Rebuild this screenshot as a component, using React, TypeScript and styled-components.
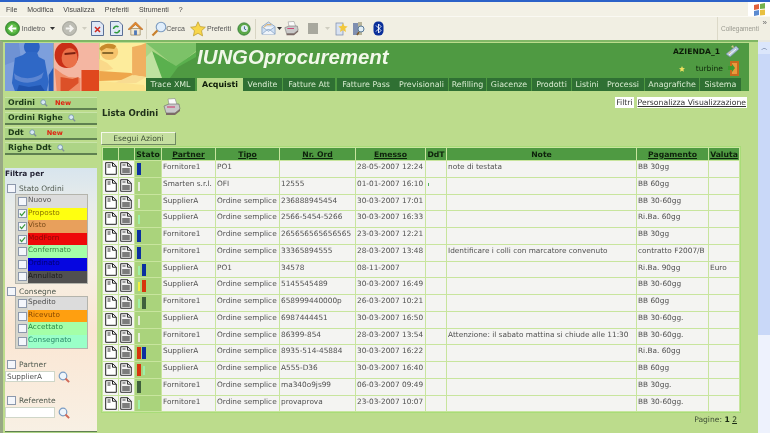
import React from "react";
import styled, { createGlobalStyle } from "styled-components";

const Global = createGlobalStyle`
  html, body { margin: 0; padding: 0; background: #fff; overflow: hidden; }
  * { box-sizing: border-box; }
  svg { display: block; }
`;

const UI = `"DejaVu Sans", Verdana, sans-serif`;
const XP = `"Liberation Sans", Arial, sans-serif`;

const Page = styled.div`
  width: 770px; height: 433px; overflow: hidden; display: flex; flex-direction: column;
  filter: blur(0.4px); font-family: ${UI}; background: #bcdc8c;
`;
const TitleStrip = styled.div`height: 2px; background: #2c62c8; flex: none;`;
const MenuBar = styled.div`
  height: 14px; flex: none; display: flex; align-items: center; background: #f3f1e6;
  font: 7px ${XP}; color: #444; padding-left: 6px; gap: 10px; position: relative;
`;
const WinFlag = styled.div`
  position: absolute; right: 0; top: 0; width: 22px; height: 15px; background: #fff;
  display: flex; align-items: center; justify-content: center;
`;
const Toolbar = styled.div`
  height: 24px; flex: none; display: flex; align-items: center; background: #f1efe3;
  border-top: 1px solid #faf9f3; font: 7px ${XP}; color: #555; padding-left: 5px; position: relative;
`;
const ToolItem = styled.span<{ $w: number; $l?: number }>`
  display: inline-flex; align-items: center; justify-content: center; flex: none;
  width: ${p => p.$w}px; margin-left: ${p => p.$l ?? 0}px; white-space: nowrap;
`;
const ToolLabel = styled.span`margin-left: 2px;`;
const ToolSep = styled.span<{ $l: number }>`
  width: 1px; height: 20px; background: #d8d5c4; flex: none; margin-left: ${p => p.$l}px;
`;
const LinksBox = styled.div`
  position: absolute; left: 717px; top: 0; bottom: 0; width: 53px; border-left: 1px solid #dcd9c8;
  color: #9a9a90; font-size: 6.5px; padding: 8px 0 0 3px;
`;
const More = styled.span`position: absolute; right: 3px; top: 1px; color: #666; font-size: 8px;`;

const Body = styled.div`flex: 1; min-height: 0; display: flex; background: #bcdc8c;`;
const Main = styled.div`
  flex: 1; min-width: 0; display: flex; flex-direction: column; border-left: 3px solid #98a884;
  border-top: 2px solid #7fb765; padding: 1px 9px 0 2px; background: #bcdc8c;
`;
const Scrollbar = styled.div`
  width: 12px; flex: none; background: #eef2fd; display: flex; flex-direction: column; border-top: 2px solid #e8e8e0;
`;
const ScrollBtn = styled.div`
  height: 12px; background: #dbe6fb; color: #4d6185; font-size: 7px; display: flex;
  align-items: center; justify-content: center;
`;
const ScrollThumb = styled.div`height: 281px; background: #c9d8f8;`;

const Header = styled.header`
  height: 48px; flex: none; background: #4f9a42; display: flex; position: relative;
`;
const HeaderRight = styled.div`flex: 1; min-width: 0; display: flex; flex-direction: column;`;
const HeaderTop = styled.div`flex: 1; display: flex; min-height: 0;`;
const Brand = styled.h1`
  margin: 1px 0 0 1px; font: italic bold 20.4px ${XP}; color: #f1f8e9; line-height: 26px; white-space: nowrap;
`;
const UserBox = styled.div`
  margin-left: auto; padding: 1px 9px 0 0; display: flex; flex-direction: column; align-items: flex-end; gap: 2px;
`;
const UserRow = styled.div<{ $bold?: boolean }>`
  display: flex; align-items: center; gap: 5px; height: 15px; font-size: 7.6px;
  color: ${p => (p.$bold ? "#0c1c08" : "#0f2a0c")}; font-weight: ${p => (p.$bold ? 700 : 400)};
`;
const StarGap = styled.span`width: 1px;`;
const Tabs = styled.nav`display: flex; height: 13px; flex: none;`;
const Tab = styled.a<{ $w: number; $l: number; $on?: boolean }>`
  width: ${p => p.$w}px; margin-left: ${p => p.$l}px; flex: none; display: flex; align-items: center;
  justify-content: center; font-size: 7.9px; white-space: nowrap;
  background: ${p => (p.$on ? "#bcdc8c" : "#2f7033")};
  color: ${p => (p.$on ? "#0c1a08" : "#d8ecd0")}; font-weight: ${p => (p.$on ? 700 : 400)};
`;

const Columns = styled.div`flex: 1; min-height: 0; display: flex;`;
const Sidebar = styled.aside`width: 92px; flex: none; display: flex; flex-direction: column; padding-top: 6px; overflow: hidden;`;
const NavItem = styled.a`
  height: 12.5px; flex: none; margin-bottom: 2.5px; background: #add486; border-bottom: 2px solid #5f8050;
  border-top: 1px solid #c8e4a8; display: flex; align-items: center; padding-left: 3px;
  font-size: 7.8px; font-weight: 700; color: #1c3a18; gap: 5px; white-space: nowrap;
`;
const NewTag = styled.span<{ $l: number }>`
  color: #e02010; font-size: 6.6px; font-weight: 700; margin-left: ${p => p.$l}px;
`;
const FilterPanel = styled.div`
  flex: none; height: 263px; overflow: hidden; margin-top: 11px;
  background: linear-gradient(180deg, #d8e5ee 0%, #e8ecea 14%, #f6efe3 40%, #fbe6d3 62%, #f8f0e4 100%);
`;
const PanelEnd = styled.div`flex: none; height: 3px; border-top: 1px solid #5f8050; background: #add486;`;
const FilterTitle = styled.div`font-size: 7.4px; font-weight: 700; color: #223; padding-top: 1px; height: 15px; line-height: 9px;`;
const GroupHead = styled.label`
  display: flex; align-items: center; height: 10px; padding-left: 2px; gap: 3px;
  font-size: 7.5px; color: #505a50;
`;
const Box = styled.span`
  width: 9px; height: 9px; flex: none; border: 1px solid #8c98ac; background: #f4f6fb;
  display: inline-flex; align-items: center; justify-content: center;
`;
const StateList = styled.div<{ $top: number }>`
  margin: ${p => p.$top}px 0 0 10px; width: 73px; border: 1px solid #b4b4ac;
`;
const StateRow = styled.div<{ $bg: string; $fg: string }>`
  display: flex; height: 12.6px; background: #d6d6ce;
  span.t { flex: 1; background: ${p => p.$bg}; color: ${p => p.$fg}; font-size: 7.3px; line-height: 9px; }
`;
const BoxCell = styled.span`width: 12px; flex: none; display: flex; align-items: center; justify-content: center;`;
const FieldRow = styled.div`display: flex; align-items: center; gap: 3px; margin-top: 1px;`;
const Field = styled.div`
  width: 50px; height: 11px; background: #fff; border: 1px solid #cfd6c8; font-size: 7.3px; color: #555;
  line-height: 9px; padding-left: 1px;
`;
const Spaced = styled.div<{ $top: number }>`margin-top: ${p => p.$top}px;`;

const Content = styled.main`flex: 1; min-width: 0; display: flex; flex-direction: column; padding-left: 6px;`;
const TitleBar = styled.div`display: flex; height: 41px; flex: none; align-items: flex-start;`;
const PageTitle = styled.h2`
  margin: 17px 0 0 -1px; font-size: 8.6px; font-weight: 700; color: #20301a; line-height: 11px; white-space: nowrap;
`;
const PrinterBox = styled.span`margin: 7px 0 0 5px;`;
const FilterLinks = styled.div`margin-left: auto; margin-right: 2px; margin-top: 6px; display: flex; gap: 3px;`;
const WhiteLink = styled.a<{ $u?: boolean }>`
  background: #fff; color: #333; height: 11px; font-size: 7.7px; line-height: 11px; padding: 0 1px;
  text-decoration: ${p => (p.$u ? "underline" : "none")};
`;
const ActionBtn = styled.button`
  width: 75px; height: 13px; margin: 0 0 0 -2px; padding: 0; background: #c5dfa0; color: #3c4c34;
  font: 7.6px ${UI}; border: 1px solid; border-color: #f4f8ea #6f8a62 #6f8a62 #f4f8ea; flex: none;
`;
const OrdersTable = styled.table`
  margin: 1px 0 0 -2px; border-collapse: separate; border-spacing: 1px; table-layout: fixed; width: 638px;
  background: #c8e59e; border: 1px solid #a8dc78; font-size: 7.35px; color: #505050; flex: none;
`;
const Col = styled.col<{ $w: number }>`width: ${p => p.$w}px;`;
const Th = styled.th<{ $plain?: boolean }>`
  height: 12px; padding: 0; background: #4f9a42; color: #0e220c; font-size: 7.7px; font-weight: 700;
  text-decoration: ${p => (p.$plain ? "none" : "underline")}; white-space: nowrap; overflow: hidden;
`;
const Row = styled.tr<{ $h: number }>`height: ${p => p.$h}px;`;
const Td = styled.td`
  padding: 1px 0 0 1px; background: #f4f4f2; vertical-align: top; white-space: nowrap;
  overflow: hidden; line-height: 9px;
`;
const IconTd = styled(Td)`padding: 1px 0 0 1px; &:first-child { padding-left: 2px; }`;
const StateTd = styled(Td)`background: #aad37c; padding: 2px 0 0 2px;`;
const Bars = styled.div`display: flex; gap: 1.5px; align-items: center; height: 12px;`;
const Bar = styled.i<{ $c: string; $thin?: boolean }>`
  display: block; width: ${p => (p.$thin ? 2 : 3.5)}px; height: ${p => (p.$thin ? 9 : 12)}px; background: ${p => p.$c};
  margin: 0 ${p => (p.$thin ? 0.75 : 0)}px;
`;
const Tick = styled.i`display: block; width: 1px; height: 3px; background: #55b060; margin: 4px 0 0 1px;`;
const Footer = styled.div`
  text-align: right; padding: 2px 12px 0 0; font-size: 7.6px; color: #3c4c34; line-height: 10px;
  b { color: #1a2a14; } u { color: #1a2a14; }
`;

const Glass = () => (
  <svg width="8" height="8" viewBox="0 0 10 10">
    <circle cx="4" cy="4" r="3" fill="#d8e8f4" stroke="#6f93a8" />
    <path d="M6 6l3 3" stroke="#7f8f9a" strokeWidth="1.6" />
  </svg>
);
const BigGlass = () => (
  <svg width="12" height="12" viewBox="0 0 12 12">
    <circle cx="5" cy="5" r="3.8" fill="#eef5fb" stroke="#7a9cc4" strokeWidth="1.2" />
    <path d="M7.500 7.500l3.600 3.600" stroke="#d06a58" strokeWidth="2" />
  </svg>
);
const Check = () => (
  <svg width="7" height="7" viewBox="0 0 8 8"><path d="M1 4l2 2.400L7 1.500" fill="none" stroke="#3a9a3a" strokeWidth="1.4" /></svg>
);
const DocA = () => (
  <svg width="12" height="13" viewBox="0 0 12 13">
    <path d="M.7.7h7l3.600 3.400v8.200H.7z" fill="#fff" stroke="#222" />
    <path d="M7.500.7v3.500h3.600" fill="none" stroke="#222" />
    <path d="M2.500 3h3M2.500 5h3" stroke="#333" />
  </svg>
);
const DocB = () => (
  <svg width="12" height="13" viewBox="0 0 12 13">
    <path d="M.7.7h7l3.600 3.400v8.200H.7z" fill="#f0f0f0" stroke="#333" />
    <path d="M7.500.7v3.500h3.600" fill="none" stroke="#333" />
    <path d="M2.500 3h3" stroke="#444" />
    <rect x="2.200" y="6" width="7.600" height="5" fill="#7c7c7c" />
  </svg>
);
const Printer = ({ s = 18 }: { s?: number }) => (
  <svg width={s} height={s} viewBox="0 0 18 18">
    <path d="M5 1l7-.5 2 6H6z" fill="#fbfbfb" stroke="#888" strokeWidth=".6" />
    <path d="M1 8l5-2h10l1 5-5 4H3z" fill="#c9c9c9" stroke="#666" strokeWidth=".6" />
    <path d="M3 15l9 0 5-4v2l-5 4H3z" fill="#7c6a66" />
    <path d="M4 9h8" stroke="#d04878" strokeWidth="1.2" />
  </svg>
);

const Hero = () => (
  <svg width="141" height="48" viewBox="0 0 142 48" preserveAspectRatio="none" style={{ flex: "none" }}>
    <rect width="49" height="48" fill="#7d9fdc" />
    <path d="M0 0h14l2 16-16 6z" fill="#6f92d4" />
    <ellipse cx="27" cy="4" rx="8" ry="8" fill="#2b63c2" />
    <path d="M22 9h10l2 5 6 3 4 22-2 9H10l-3-8 3-25 8-3z" fill="#2f68c6" />
    <path d="M9 30c6 7 22 7 30-1l-2 6c-8 6-20 6-27 1z" fill="#5d86d2" />
    <path d="M44 48V32l5-8v24z" fill="#245ab6" />
    <path d="M14 42l10 2 12-2 4 6H12z" fill="#1f52ac" />

    <rect x="49" width="46" height="48" fill="#f4b6a2" />
    <ellipse cx="62" cy="12" rx="12" ry="13" fill="#c92f16" />
    <ellipse cx="65" cy="15" rx="8" ry="10" fill="#ea7048" />
    <path d="M60 10l11-1v2l-11 1z" fill="#7a2010" />
    <path d="M50 25l8 6 6 3 12 1v13H52z" fill="#ef8c66" />
    <path d="M56 34l12 2 6-2 0 6-10 8h-8z" fill="#dc5028" />
    <path d="M77 27h18v21H77z" fill="#e0481e" />

    <rect x="95" width="47" height="48" fill="#fdec9c" />
    <ellipse cx="105" cy="9" rx="9" ry="8" fill="#f6c46c" />
    <path d="M95 6c2-5 12-7 17-3l-2 3-8-1-5 3z" fill="#c88a2c" />
    <path d="M98 9h11v2H98z" fill="#8a6a2c" />
    <path d="M95 16l8 4 6 6-14 3z" fill="#fad98a" />
    <path d="M95 28l32 2 5 4-10 3-27 1z" fill="#eea64c" />
    <path d="M128 4l9-2 5-2v34l-14-2z" fill="#f0b060" />
    <path d="M128 32l14 2-10 6-24 1z" fill="#f8dc92" />
    <path d="M95 38l45 4 2 6H95z" fill="#fbe28c" />
  </svg>
);
const Envelope = () => (
  <svg width="50" height="35" viewBox="0 0 50 35" style={{ flex: "none" }}>
    <rect width="50" height="35" fill="#a9d585" />
    <path d="M0 0h50v8L30 24z" fill="#7cc268" />
    <path d="M6 8l24 15 20-14v26H14z" fill="#5ab04e" />
    <path d="M6 8l10 27h-16V14z" fill="#bfe2a0" />
    <path d="M32 24l18-10v21H24z" fill="#4f9a42" />
  </svg>
);

const Back = () => (
  <svg width="15" height="15" viewBox="0 0 16 16">
    <circle cx="8" cy="8" r="7.400" fill="#4bab3b" stroke="#2d7d28" />
    <circle cx="8" cy="8" r="5" fill="#66c04e" />
    <path d="M12 8H5M8 4.600L4.600 8 8 11.400" fill="none" stroke="#fff" strokeWidth="2" />
  </svg>
);
const Forward = () => (
  <svg width="15" height="15" viewBox="0 0 16 16">
    <circle cx="8" cy="8" r="7.400" fill="#bdbdb4" stroke="#a0a098" />
    <path d="M4 8h7M8 4.600L11.400 8 8 11.400" fill="none" stroke="#f4f4f0" strokeWidth="2" />
  </svg>
);
const Caret = ({ c = "#333" }: { c?: string }) => (
  <svg width="5" height="3" viewBox="0 0 5 3"><path d="M0 0h5L2.500 3z" fill={c} /></svg>
);
const PageIcon = ({ children }: { children: React.ReactNode }) => (
  <svg width="13" height="15" viewBox="0 0 13 15">
    <path d="M.5.5h8.500l3.500 3.500v10.500H.5z" fill="#dfe8f6" stroke="#5a6f96" />
    {children}
  </svg>
);
const Home = () => (
  <svg width="15" height="15" viewBox="0 0 16 16">
    <path d="M3 8v7h10V8z" fill="#f2e8d0" stroke="#8f7a50" strokeWidth=".7" />
    <path d="M0 9l8-8 8 8-2 0-6-5-6 5z" fill="#e58a2c" stroke="#a85a18" strokeWidth=".6" />
    <rect x="6.500" y="10" width="3" height="5" fill="#4f78b8" />
  </svg>
);
const Search = () => (
  <svg width="16" height="16" viewBox="0 0 16 16">
    <circle cx="10" cy="6" r="4.800" fill="#e0eefb" stroke="#7d9cc0" strokeWidth="1.100" />
    <path d="M6.400 9.400L1.500 14.500" stroke="#c8802c" strokeWidth="2.200" />
  </svg>
);
const Star = () => (
  <svg width="16" height="16" viewBox="0 0 16 16">
    <path d="M8 .8l2.200 4.800 5.200.6-3.900 3.500 1.100 5.200L8 12.300l-4.600 2.600 1.100-5.200L.6 6.200l5.200-.6z" fill="#f8d64a" stroke="#b89a2c" strokeWidth=".7" />
  </svg>
);
const History = () => (
  <svg width="14" height="14" viewBox="0 0 16 16">
    <circle cx="8" cy="8" r="7" fill="#5ca848" stroke="#2f7a34" />
    <circle cx="8.500" cy="7.500" r="4" fill="#e0eef0" />
    <path d="M8.500 5v3l2 1" stroke="#2f5a8a" fill="none" />
  </svg>
);
const Mail = () => (
  <svg width="15" height="15" viewBox="0 0 16 16">
    <path d="M1 6l7-5 7 5v8H1z" fill="#cfe0f4" stroke="#7b98bc" strokeWidth=".8" />
    <path d="M1 14l6-5h2l6 5M1 6l7 5 7-5" fill="#eef4fb" stroke="#7b98bc" strokeWidth=".7" />
    <path d="M3 7l3-3h5" fill="none" stroke="#e0a040" />
  </svg>
);
const SquareIcon = () => <svg width="10" height="11" viewBox="0 0 10 11"><rect width="10" height="11" fill="#a8a89e" /></svg>;
const Fav1 = () => (
  <svg width="13" height="15" viewBox="0 0 13 15">
    <rect x="1" y="2" width="7" height="12" fill="#d8e2f2" stroke="#7a8aa8" strokeWidth=".7" />
    <path d="M8 2l1.400 3 3.300.4-2.400 2.200.7 3.300L8 9.300l-3 1.600.7-3.300-2.400-2.200 3.300-.4z" fill="#f2c83c" />
  </svg>
);
const Fav2 = () => (
  <svg width="12" height="15" viewBox="0 0 12 15">
    <rect x="0" y="2" width="5" height="12" fill="#7f8fb0" />
    <rect x="5" y="1" width="4" height="13" fill="#b8b49a" />
    <circle cx="8" cy="8" r="3" fill="#e2eef6" stroke="#5a7a98" />
    <path d="M6 11l-2 3" stroke="#7a5a30" strokeWidth="1.500" />
  </svg>
);
const Bluetooth = () => (
  <svg width="11" height="15" viewBox="0 0 11 15">
    <rect x=".5" y=".5" width="10" height="14" rx="4.500" fill="#0a2f9a" />
    <path d="M3 4.500l5 5-2.500 2.500v-9L8 5.500l-5 5" fill="none" stroke="#fff" strokeWidth=".9" />
  </svg>
);
const Flag = () => (
  <svg width="13" height="13" viewBox="0 0 13 13">
    <path d="M1 2l5-1v5L1 7z" fill="#e0603c" />
    <path d="M7 1l5-1v5.500L7 6z" fill="#74b04c" />
    <path d="M1 8l5-1v5l-5 1z" fill="#5a8ad0" />
    <path d="M7 7l5-.5V12l-5 .5z" fill="#e8c040" />
  </svg>
);
const Company = () => (
  <svg width="15" height="15" viewBox="0 0 15 15">
    <path d="M1 10l10-8 3 3-9 8z" fill="#b4c8dc" stroke="#6f86a0" strokeWidth=".6" />
    <path d="M6 3l2-2 1 3zM3 9l3-2-1 3z" fill="#d8c890" />
    <path d="M4 11l7-6" stroke="#f4f8fc" />
  </svg>
);
const Door = () => (
  <svg width="12" height="15" viewBox="0 0 12 15">
    <rect x="2" y="0" width="9" height="15" fill="#c66a1e" />
    <rect x="4" y="2" width="5" height="11" fill="#e89a3c" />
    <path d="M0 5h4V3l3 4-3 4V9H0z" fill="#3c9a30" />
  </svg>
);
const TinyStar = () => (
  <svg width="6" height="6" viewBox="0 0 6 6"><path d="M3 0l.9 2 2.100.2-1.600 1.400.5 2.200L3 4.700 1.100 5.800l.5-2.200L0 2.200 2.100 2z" fill="#efe060" /></svg>
);

const M = "#9ff0a8"; const W = "#e6ecdc"; const B = "#0a2fa0"; const R = "#d8340c"; const Y = "#f4f040"; const D = "#3f5f3c";
type S = { c: string; thin?: boolean };
const m: S = { c: M, thin: true }, w: S = { c: W, thin: true }, b: S = { c: B }, r: S = { c: R }, y: S = { c: Y, thin: true }, d: S = { c: D };
const rows: [S[], string, string, string, string, string, string, string][] = [
  [[b], "Fornitore1", "PO1", "", "28-05-2007 12:24", "note di testata", "BB 30gg", ""],
  [[w], "Smarten s.r.l.", "OFI", "12555", "01-01-2007 16:10", "", "BB 60gg", ""],
  [[w], "SupplierA", "Ordine semplice", "236888945454", "30-03-2007 17:01", "", "BB 30-60gg", ""],
  [[m], "SupplierA", "Ordine semplice", "2566-5454-5266", "30-03-2007 16:33", "", "Ri.Ba. 60gg", ""],
  [[b], "Fornitore1", "Ordine semplice", "265656565656565", "23-03-2007 12:21", "", "BB 30gg", ""],
  [[b], "Fornitore1", "Ordine semplice", "33365894555", "28-03-2007 13:48", "Identificare i colli con marcatore convenuto", "contratto F2007/B", ""],
  [[m, b], "SupplierA", "PO1", "34578", "08-11-2007", "", "Ri.Ba. 90gg", "Euro"],
  [[y, r], "SupplierA", "Ordine semplice", "5145545489", "30-03-2007 16:49", "", "BB 30-60gg", ""],
  [[m, d], "Fornitore1", "Ordine semplice", "658999440000p", "26-03-2007 10:21", "", "BB 60gg", ""],
  [[w], "SupplierA", "Ordine semplice", "6987444451", "30-03-2007 16:50", "", "BB 30-60gg.", ""],
  [[w], "Fornitore1", "Ordine semplice", "86399-854", "28-03-2007 13:54", "Attenzione: il sabato mattina si chiude alle 11:30", "BB 30-60gg.", ""],
  [[r, b], "SupplierA", "Ordine semplice", "8935-514-45884", "30-03-2007 16:22", "", "Ri.Ba. 60gg", ""],
  [[r, m], "SupplierA", "Ordine semplice", "A555-D36", "30-03-2007 16:40", "", "BB 60gg", ""],
  [[d], "Fornitore1", "Ordine semplice", "ma340o9js99", "06-03-2007 09:49", "", "BB 30gg.", ""],
  [[m], "Fornitore1", "Ordine semplice", "provaprova", "23-03-2007 10:07", "", "BB 30-60gg.", ""],
];
const tabs: [string, number, number][] = [
  ["Trace XML", 49, 0], ["Acquisti", 46, 2], ["Vendite", 39, 0], ["Fatture Att", 52, 1], ["Fatture Pass", 58, 2],
  ["Previsionali", 53, 0], ["Refilling", 37, 1], ["Giacenze", 44, 1], ["Prodotti", 39, 1], ["Listini", 30, 1],
  ["Processi", 42, 0], ["Anagrafiche", 54, 1], ["Sistema", 41, 1],
];
const widths = [15, 15, 26, 53, 63, 75, 69, 20, 189, 71, 30];
const rowHeight = (i: number) => Math.round((i + 1) * 16.75) - Math.round(i * 16.75) - 1;
const orderStates: [string, string, string, boolean][] = [
  ["Nuovo", "#dcdcdc", "#555", false], ["Proposto", "#ffff10", "#8a7400", true], ["Visto", "#e8a05c", "#7a4a18", true],
  ["ModForn", "#ee0a0a", "#8a0808", true], ["Confermato", "#a4ffa8", "#3a8a48", false], ["Ordinato", "#0606e0", "#000070", false],
  ["Annullato", "#505050", "#1c1c1c", false],
];
const deliveryStates: [string, string, string][] = [
  ["Spedito", "#dcdcdc", "#505050"], ["Ricevuto", "#ff9f10", "#8a4a00"], ["Accettato", "#a4ffa8", "#2a8a48"], ["Consegnato", "#9affc8", "#2a8a68"],
];

export default function App() {
  return (
    <>
      <Global />
      <Page>
        <TitleStrip />
        <MenuBar>
          <span>File</span><span>Modifica</span><span>Visualizza</span><span>Preferiti</span><span>Strumenti</span><span>?</span>
          <WinFlag><Flag /></WinFlag>
        </MenuBar>
        <Toolbar>
          <ToolItem $w={15}><Back /></ToolItem>
          <ToolItem $w={25}><ToolLabel>Indietro</ToolLabel></ToolItem>
          <ToolItem $w={5} $l={5}><Caret /></ToolItem>
          <ToolItem $w={15} $l={7}><Forward /></ToolItem>
          <ToolItem $w={5} $l={5}><Caret c="#cfcdc0" /></ToolItem>
          <ToolItem $w={13} $l={4}><PageIcon><path d="M4 6l5 5M9 6l-5 5" stroke="#d02a20" strokeWidth="1.600" /></PageIcon></ToolItem>
          <ToolItem $w={13} $l={6}><PageIcon><path d="M3.500 8a3 3 0 015-2M9.500 9a3 3 0 01-5 2" fill="none" stroke="#2f9a3a" strokeWidth="1.600" /></PageIcon></ToolItem>
          <ToolItem $w={15} $l={5}><Home /></ToolItem>
          <ToolSep $l={3} />
          <ToolItem $w={16} $l={4}><Search /></ToolItem>
          <ToolItem $w={17}>Cerca</ToolItem>
          <ToolItem $w={16} $l={6}><Star /></ToolItem>
          <ToolItem $w={24} $l={1}>Preferiti</ToolItem>
          <ToolItem $w={14} $l={6}><History /></ToolItem>
          <ToolSep $l={4} />
          <ToolItem $w={15} $l={5}><Mail /></ToolItem>
          <ToolItem $w={5} $l={1}><Caret /></ToolItem>
          <ToolItem $w={15} $l={2}><Printer s={15} /></ToolItem>
          <ToolItem $w={10} $l={9}><SquareIcon /></ToolItem>
          <ToolItem $w={5} $l={7}><Caret c="#cfcdc0" /></ToolItem>
          <ToolItem $w={13} $l={5}><Fav1 /></ToolItem>
          <ToolItem $w={12} $l={5}><Fav2 /></ToolItem>
          <ToolItem $w={11} $l={8}><Bluetooth /></ToolItem>
          <LinksBox>Collegamenti<More>»</More></LinksBox>
        </Toolbar>
        <Body>
          <Main>
            <Header>
              <Hero />
              <HeaderRight>
                <HeaderTop>
                  <Envelope />
                  <Brand>IUNGOprocurement</Brand>
                  <UserBox>
                    <UserRow $bold>AZIENDA_1 <Company /></UserRow>
                    <UserRow><TinyStar /><StarGap />turbine <Door /></UserRow>
                  </UserBox>
                </HeaderTop>
                <Tabs>
                  {tabs.map(([t, w, l]) => <Tab key={t} $w={w} $l={l} $on={t === "Acquisti"}>{t}</Tab>)}
                </Tabs>
              </HeaderRight>
            </Header>
            <Columns>
              <Sidebar>
                <NavItem>Ordini <Glass /><NewTag $l={2}>New</NewTag></NavItem>
                <NavItem>Ordini Righe <Glass /></NavItem>
                <NavItem>Ddt <Glass /><NewTag $l={5}>New</NewTag></NavItem>
                <NavItem>Righe Ddt <Glass /></NavItem>
                <FilterPanel>
                  <FilterTitle>Filtra per</FilterTitle>
                  <GroupHead><Box />Stato Ordini</GroupHead>
                  <StateList $top={1}>
                    {orderStates.map(([t, bg, fg, on]) => (
                      <StateRow key={t} $bg={bg} $fg={fg}><BoxCell><Box>{on && <Check />}</Box></BoxCell><span className="t">{t}</span></StateRow>
                    ))}
                  </StateList>
                  <Spaced $top={2}><GroupHead><Box />Consegne</GroupHead></Spaced>
                  <StateList $top={0}>
                    {deliveryStates.map(([t, bg, fg]) => (
                      <StateRow key={t} $bg={bg} $fg={fg}><BoxCell><Box /></BoxCell><span className="t">{t}</span></StateRow>
                    ))}
                  </StateList>
                  <Spaced $top={11}><GroupHead><Box />Partner</GroupHead></Spaced>
                  <FieldRow><Field>SupplierA</Field><BigGlass /></FieldRow>
                  <Spaced $top={13}><GroupHead><Box />Referente</GroupHead></Spaced>
                  <FieldRow><Field /><BigGlass /></FieldRow>
                </FilterPanel>
                <PanelEnd />
              </Sidebar>
              <Content>
                <TitleBar>
                  <PageTitle>Lista Ordini</PageTitle>
                  <PrinterBox><Printer /></PrinterBox>
                  <FilterLinks><WhiteLink>Filtri</WhiteLink><WhiteLink $u>Personalizza Visualizzazione</WhiteLink></FilterLinks>
                </TitleBar>
                <ActionBtn>Esegui Azioni</ActionBtn>
                <OrdersTable>
                  <colgroup>{widths.map((w, i) => <Col key={i} $w={w} />)}</colgroup>
                  <thead>
                    <tr>
                      <Th $plain /><Th $plain /><Th $plain>Stato</Th><Th>Partner</Th><Th>Tipo</Th><Th>Nr. Ord</Th><Th>Emesso</Th>
                      <Th $plain>DdT</Th><Th $plain>Note</Th><Th>Pagamento</Th><Th>Valuta</Th>
                    </tr>
                  </thead>
                  <tbody>
                    {rows.map((r, i) => (
                      <Row key={i} $h={rowHeight(i)}>
                        <IconTd><DocA /></IconTd>
                        <IconTd><DocB /></IconTd>
                        <StateTd><Bars>{r[0].map((s, j) => <Bar key={j} $c={s.c} $thin={s.thin} />)}</Bars></StateTd>
                        <Td>{r[1]}</Td><Td>{r[2]}</Td><Td>{r[3]}</Td><Td>{r[4]}</Td>
                        <Td>{i === 1 && <Tick />}</Td>
                        <Td>{r[5]}</Td><Td>{r[6]}</Td><Td>{r[7]}</Td>
                      </Row>
                    ))}
                  </tbody>
                </OrdersTable>
                <Footer>Pagine: <b>1</b> <u>2</u></Footer>
              </Content>
            </Columns>
          </Main>
          <Scrollbar>
            <ScrollBtn>︿</ScrollBtn>
            <ScrollThumb />
          </Scrollbar>
        </Body>
      </Page>
    </>
  );
}
